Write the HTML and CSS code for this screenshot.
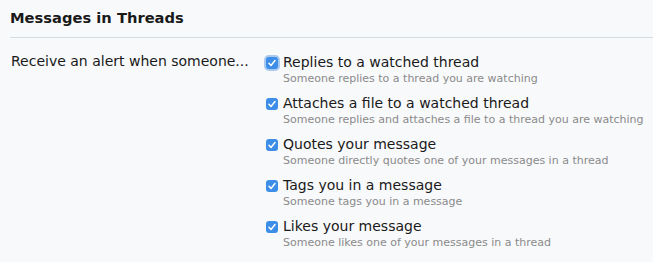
FILE: index.html
```html
<!DOCTYPE html>
<html>
<head>
<meta charset="utf-8">
<link rel="stylesheet" href="styles.css">
</head>
<body>
<div class="block">
  <h2 class="block-title">Messages in Threads</h2>
  <div class="form-row">
    <div class="row-label">Receive an alert when someone...</div>
    <ul class="choices">
      <li class="choice">
        <span class="cb focus"><svg viewBox="0 0 12 12"><path d="M3 6.3 L5 8.4 L9 3.6"/></svg></span>
        <div class="choice-text">
          <div class="choice-label">Replies to a watched thread</div>
          <div class="choice-hint">Someone replies to a thread you are watching</div>
        </div>
      </li>
      <li class="choice">
        <span class="cb"><svg viewBox="0 0 12 12"><path d="M3 6.3 L5 8.4 L9 3.6"/></svg></span>
        <div class="choice-text">
          <div class="choice-label">Attaches a file to a watched thread</div>
          <div class="choice-hint">Someone replies and attaches a file to a thread you are watching</div>
        </div>
      </li>
      <li class="choice">
        <span class="cb"><svg viewBox="0 0 12 12"><path d="M3 6.3 L5 8.4 L9 3.6"/></svg></span>
        <div class="choice-text">
          <div class="choice-label">Quotes your message</div>
          <div class="choice-hint">Someone directly quotes one of your messages in a thread</div>
        </div>
      </li>
      <li class="choice">
        <span class="cb"><svg viewBox="0 0 12 12"><path d="M3 6.3 L5 8.4 L9 3.6"/></svg></span>
        <div class="choice-text">
          <div class="choice-label">Tags you in a message</div>
          <div class="choice-hint">Someone tags you in a message</div>
        </div>
      </li>
      <li class="choice">
        <span class="cb"><svg viewBox="0 0 12 12"><path d="M3 6.3 L5 8.4 L9 3.6"/></svg></span>
        <div class="choice-text">
          <div class="choice-label">Likes your message</div>
          <div class="choice-hint">Someone likes one of your messages in a thread</div>
        </div>
      </li>
    </ul>
  </div>
</div>
</body>
</html>
```
FILE: styles.css
```css
html, body {
  margin: 0;
  padding: 0;
  background: #f8f9fb;
}
body {
  font-family: "DejaVu Sans", Verdana, sans-serif;
  color: #1a1a1a;
  width: 653px;
  height: 262px;
  overflow: hidden;
}
.block {
  padding: 0 0 0 10px;
}
.block-title {
  margin: 0;
  padding: 9px 0 10px 0;
  font-size: 14.7px;
  font-weight: bold;
  line-height: 18px;
  border-bottom: 1px solid #d3dbe3;
}
.form-row {
  display: flex;
  padding-top: 14px;
}
.row-label {
  width: 255px;
  flex: none;
  font-size: 14px;
  line-height: 18px;
  padding-left: 1px;
  padding-top: 0;
}
.choices {
  list-style: none;
  margin: 0;
  padding: 0;
}
.choice {
  display: flex;
  align-items: flex-start;
  height: 41px;
}
.cb {
  flex: none;
  width: 12px;
  height: 12px;
  margin: 5px 5px 0 0;
  border-radius: 3px;
  background: #3d8ee8;
  display: flex;
  align-items: center;
  justify-content: center;
}
.cb.focus {
  box-shadow: 0 0 0 2px #a9c9ef;
}
.cb svg {
  width: 12px;
  height: 12px;
  fill: none;
  stroke: #fff;
  stroke-width: 1.5;
  stroke-linecap: round;
  stroke-linejoin: round;
}
.choice-label {
  font-size: 14px;
  line-height: 20px;
}
.choice-hint {
  font-size: 11px;
  line-height: 14px;
  color: #8a8a8a;
}
```
